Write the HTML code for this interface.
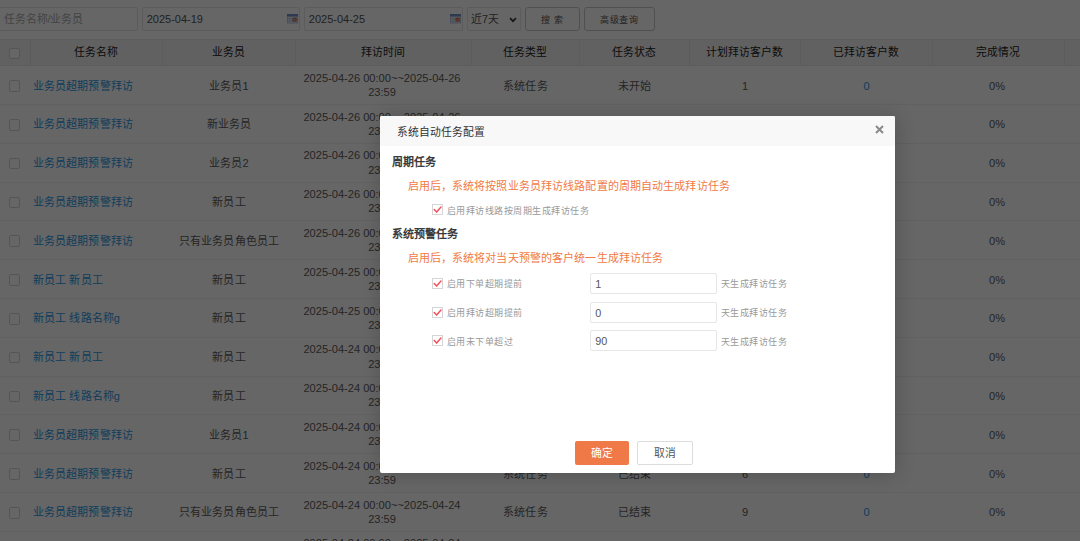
<!DOCTYPE html><html lang="zh-CN"><head><meta charset="utf-8"><style>
*{box-sizing:border-box;margin:0;padding:0}
html,body{width:1080px;height:541px;overflow:hidden}
body{position:relative;background:#fff;font-family:"Liberation Sans",sans-serif;font-size:10.8px;color:#333}
.inp{position:absolute;top:7px;height:23.5px;border:1px solid #e6e6e6;border-radius:2px;background:#fff;font-size:11px;color:#555;line-height:22.5px;padding-left:4px;white-space:nowrap}
.btn{position:absolute;top:7px;height:23.5px;border:1px solid #c9c9c9;border-radius:3px;background:#fff;font-size:9px;letter-spacing:0.6px;color:#555;line-height:24px;text-align:center;white-space:nowrap}
.cal{position:absolute;top:6px;width:11px;height:9.5px}
.hdr{position:absolute;left:0;top:38.5px;width:1080px;height:27px;background:#f2f2f2;border-top:1px solid #e9e9e9;border-bottom:1px solid #e9e9e9}
.th{position:absolute;top:0;height:25px;line-height:25px;text-align:center;color:#222;font-size:10.8px;border-right:1px solid #e6e6e6;white-space:nowrap}
.row{position:absolute;left:0;width:1080px;height:38.8px;border-bottom:1px solid #f3f3f3}
.td{position:absolute;top:0;height:38px;display:flex;align-items:center;justify-content:center;text-align:center;font-size:11px;letter-spacing:0.1px;color:#5c5c5c;line-height:14.2px;white-space:nowrap;padding-top:1.1px}
.tl{justify-content:flex-start;text-align:left;padding-left:3px}
.dt{font-size:11.08px;letter-spacing:0}
.tm{padding-top:0;padding-bottom:0.6px}
.cb{position:absolute;left:8.7px;width:11.5px;height:11.5px;border:1px solid #d5d5d5;border-radius:2px;background:#fff}
.lnk{color:#2b98e4}
.shade{position:absolute;left:0;top:0;width:1080px;height:541px;background:rgba(0,0,0,0.6)}
.dlg{position:absolute;left:380px;top:116px;width:515px;height:356.5px;background:#fff;box-shadow:1px 1px 20px rgba(0,0,0,.2);border-radius:2px;overflow:hidden}
.ttl{position:absolute;left:0;top:0;width:100%;height:29.8px;background:#f8f8f8;font-size:10.8px;color:#333;line-height:29.3px;padding-left:16.5px;padding-top:2.2px}
.x{position:absolute;left:495.3px;top:9px;width:9px;height:9px}
.sec{position:absolute;left:12px;font-size:11px;font-weight:bold;color:#3a3a3a;white-space:nowrap}
.tip{position:absolute;left:27.5px;font-size:11px;letter-spacing:0.12px;color:#f07a45;white-space:nowrap}
.ck{position:absolute;left:51.5px;width:11px;height:11px;border:1px solid #d5d5d5;background:#fff}
.lbl{position:absolute;left:66.5px;font-size:9px;letter-spacing:0.5px;color:#999;white-space:nowrap}
.fi{position:absolute;left:209.8px;width:127px;height:21px;border:1px solid #e6e6e6;border-radius:2px;font-size:10.8px;color:#555;line-height:20.4px;padding-left:4.5px}
.suf{position:absolute;left:340.5px;font-size:9px;letter-spacing:0.5px;color:#999;white-space:nowrap}
.ok{position:absolute;left:195px;top:325px;width:54px;height:23.5px;background:#ef7a47;border-radius:2px;color:#fff;font-size:10.8px;line-height:24.5px;text-align:center}
.cancel{position:absolute;left:256.7px;top:325px;width:56.3px;height:23.5px;background:#fff;border:1px solid #dcdcdc;border-radius:2px;color:#555;font-size:10.8px;line-height:22.5px;text-align:center;padding-left:1px}
</style></head><body>
<div class="inp" style="left:-5px;width:143px;color:#aaa;padding-left:7.5px;font-size:10.8px">任务名称/业务员</div>
<div class="inp" style="left:141.7px;width:158px">2025-04-19<svg class="cal" style="left:144.5px" viewBox="0 0 11 9.5" width="11" height="9.5"><rect x="0" y="0" width="11" height="9.5" fill="#b4c4de"/><rect x="0" y="0" width="11" height="2.2" fill="#7090c8"/><g fill="#e8eef7"><rect x="1" y="3" width="1.6" height="1.5"/><rect x="3.3" y="3" width="1.6" height="1.5"/><rect x="5.6" y="3" width="1.6" height="1.5"/><rect x="7.9" y="3" width="1.6" height="1.5"/><rect x="1" y="5.3" width="1.6" height="1.5"/><rect x="3.3" y="5.3" width="1.6" height="1.5"/><rect x="1" y="7.5" width="1.6" height="1.3"/><rect x="3.3" y="7.5" width="1.6" height="1.3"/><rect x="5.6" y="7.5" width="1.6" height="1.3"/><rect x="7.9" y="7.5" width="1.6" height="1.3"/></g><circle cx="7.6" cy="5.7" r="1.6" fill="none" stroke="#e0602e" stroke-width="1.1"/></svg></div>
<div class="inp" style="left:303.8px;width:158.8px">2025-04-25<svg class="cal" style="left:145px" viewBox="0 0 11 9.5" width="11" height="9.5"><rect x="0" y="0" width="11" height="9.5" fill="#b4c4de"/><rect x="0" y="0" width="11" height="2.2" fill="#7090c8"/><g fill="#e8eef7"><rect x="1" y="3" width="1.6" height="1.5"/><rect x="3.3" y="3" width="1.6" height="1.5"/><rect x="5.6" y="3" width="1.6" height="1.5"/><rect x="7.9" y="3" width="1.6" height="1.5"/><rect x="1" y="5.3" width="1.6" height="1.5"/><rect x="3.3" y="5.3" width="1.6" height="1.5"/><rect x="1" y="7.5" width="1.6" height="1.3"/><rect x="3.3" y="7.5" width="1.6" height="1.3"/><rect x="5.6" y="7.5" width="1.6" height="1.3"/><rect x="7.9" y="7.5" width="1.6" height="1.3"/></g><circle cx="7.6" cy="5.7" r="1.6" fill="none" stroke="#e0602e" stroke-width="1.1"/></svg></div>
<div class="inp" style="left:467px;width:54px;font-size:10.8px;padding-left:3px;line-height:23.5px">近7天<svg style="position:absolute;left:40.7px;top:8.6px" width="8" height="6" viewBox="0 0 8 6"><path d="M1 1.2 L4 4.2 L7 1.2" stroke="#3a3a3a" stroke-width="1.7" fill="none"/></svg></div>
<div class="btn" style="left:524.5px;width:55px">搜 索</div>
<div class="btn" style="left:584px;width:71px">高级查询</div>
<div class="hdr"><div class="cb" style="top:8.2px"></div><div class="th" style="left:0;width:30.5px"></div>
<div class="th" style="left:30px;width:133px">任务名称</div>
<div class="th" style="left:162px;width:134px">业务员</div>
<div class="th" style="left:295px;width:176.5px">拜访时间</div>
<div class="th" style="left:471px;width:109px">任务类型</div>
<div class="th" style="left:579px;width:111px">任务状态</div>
<div class="th" style="left:689px;width:112px">计划拜访客户数</div>
<div class="th" style="left:800px;width:133px">已拜访客户数</div>
<div class="th" style="left:932px;width:133px">完成情况</div>
</div>
<div class="row" style="top:66.20px"><div class="cb" style="top:14px"></div>
<div class="td lnk tl" style="left:30px;width:133px">业务员超期预警拜访</div>
<div class="td" style="left:162px;width:134px">业务员1</div>
<div class="td dt tm" style="left:294px;width:176px">2025-04-26 00:00~~2025-04-26<br>23:59</div>
<div class="td" style="left:471px;width:109px">系统任务</div>
<div class="td" style="left:579px;width:111px">未开始</div>
<div class="td dt" style="left:689px;width:112px">1</div>
<div class="td lnk dt" style="left:800px;width:133px">0</div>
<div class="td dt" style="left:930.5px;width:133px">0%</div>
</div>
<div class="row" style="top:105.00px"><div class="cb" style="top:14px"></div>
<div class="td lnk tl" style="left:30px;width:133px">业务员超期预警拜访</div>
<div class="td" style="left:162px;width:134px">新业务员</div>
<div class="td dt tm" style="left:294px;width:176px">2025-04-26 00:00~~2025-04-26<br>23:59</div>
<div class="td" style="left:471px;width:109px">系统任务</div>
<div class="td" style="left:579px;width:111px">未开始</div>
<div class="td dt" style="left:689px;width:112px">1</div>
<div class="td lnk dt" style="left:800px;width:133px">0</div>
<div class="td dt" style="left:930.5px;width:133px">0%</div>
</div>
<div class="row" style="top:143.80px"><div class="cb" style="top:14px"></div>
<div class="td lnk tl" style="left:30px;width:133px">业务员超期预警拜访</div>
<div class="td" style="left:162px;width:134px">业务员2</div>
<div class="td dt tm" style="left:294px;width:176px">2025-04-26 00:00~~2025-04-26<br>23:59</div>
<div class="td" style="left:471px;width:109px">系统任务</div>
<div class="td" style="left:579px;width:111px">未开始</div>
<div class="td dt" style="left:689px;width:112px">1</div>
<div class="td lnk dt" style="left:800px;width:133px">0</div>
<div class="td dt" style="left:930.5px;width:133px">0%</div>
</div>
<div class="row" style="top:182.60px"><div class="cb" style="top:14px"></div>
<div class="td lnk tl" style="left:30px;width:133px">业务员超期预警拜访</div>
<div class="td" style="left:162px;width:134px">新员工</div>
<div class="td dt tm" style="left:294px;width:176px">2025-04-26 00:00~~2025-04-26<br>23:59</div>
<div class="td" style="left:471px;width:109px">系统任务</div>
<div class="td" style="left:579px;width:111px">未开始</div>
<div class="td dt" style="left:689px;width:112px">1</div>
<div class="td lnk dt" style="left:800px;width:133px">0</div>
<div class="td dt" style="left:930.5px;width:133px">0%</div>
</div>
<div class="row" style="top:221.40px"><div class="cb" style="top:14px"></div>
<div class="td lnk tl" style="left:30px;width:133px">业务员超期预警拜访</div>
<div class="td" style="left:162px;width:134px">只有业务员角色员工</div>
<div class="td dt tm" style="left:294px;width:176px">2025-04-26 00:00~~2025-04-26<br>23:59</div>
<div class="td" style="left:471px;width:109px">系统任务</div>
<div class="td" style="left:579px;width:111px">未开始</div>
<div class="td dt" style="left:689px;width:112px">1</div>
<div class="td lnk dt" style="left:800px;width:133px">0</div>
<div class="td dt" style="left:930.5px;width:133px">0%</div>
</div>
<div class="row" style="top:260.20px"><div class="cb" style="top:14px"></div>
<div class="td lnk tl" style="left:30px;width:133px">新员工 新员工</div>
<div class="td" style="left:162px;width:134px">新员工</div>
<div class="td dt tm" style="left:294px;width:176px">2025-04-25 00:00~~2025-04-25<br>23:59</div>
<div class="td" style="left:471px;width:109px">系统任务</div>
<div class="td" style="left:579px;width:111px">已结束</div>
<div class="td dt" style="left:689px;width:112px">1</div>
<div class="td lnk dt" style="left:800px;width:133px">0</div>
<div class="td dt" style="left:930.5px;width:133px">0%</div>
</div>
<div class="row" style="top:299.00px"><div class="cb" style="top:14px"></div>
<div class="td lnk tl" style="left:30px;width:133px">新员工 线路名称g</div>
<div class="td" style="left:162px;width:134px">新员工</div>
<div class="td dt tm" style="left:294px;width:176px">2025-04-25 00:00~~2025-04-25<br>23:59</div>
<div class="td" style="left:471px;width:109px">系统任务</div>
<div class="td" style="left:579px;width:111px">已结束</div>
<div class="td dt" style="left:689px;width:112px">1</div>
<div class="td lnk dt" style="left:800px;width:133px">0</div>
<div class="td dt" style="left:930.5px;width:133px">0%</div>
</div>
<div class="row" style="top:337.80px"><div class="cb" style="top:14px"></div>
<div class="td lnk tl" style="left:30px;width:133px">新员工 新员工</div>
<div class="td" style="left:162px;width:134px">新员工</div>
<div class="td dt tm" style="left:294px;width:176px">2025-04-24 00:00~~2025-04-24<br>23:59</div>
<div class="td" style="left:471px;width:109px">系统任务</div>
<div class="td" style="left:579px;width:111px">已结束</div>
<div class="td dt" style="left:689px;width:112px">1</div>
<div class="td lnk dt" style="left:800px;width:133px">0</div>
<div class="td dt" style="left:930.5px;width:133px">0%</div>
</div>
<div class="row" style="top:376.60px"><div class="cb" style="top:14px"></div>
<div class="td lnk tl" style="left:30px;width:133px">新员工 线路名称g</div>
<div class="td" style="left:162px;width:134px">新员工</div>
<div class="td dt tm" style="left:294px;width:176px">2025-04-24 00:00~~2025-04-24<br>23:59</div>
<div class="td" style="left:471px;width:109px">系统任务</div>
<div class="td" style="left:579px;width:111px">已结束</div>
<div class="td dt" style="left:689px;width:112px">1</div>
<div class="td lnk dt" style="left:800px;width:133px">0</div>
<div class="td dt" style="left:930.5px;width:133px">0%</div>
</div>
<div class="row" style="top:415.40px"><div class="cb" style="top:14px"></div>
<div class="td lnk tl" style="left:30px;width:133px">业务员超期预警拜访</div>
<div class="td" style="left:162px;width:134px">业务员1</div>
<div class="td dt tm" style="left:294px;width:176px">2025-04-24 00:00~~2025-04-24<br>23:59</div>
<div class="td" style="left:471px;width:109px">系统任务</div>
<div class="td" style="left:579px;width:111px">已结束</div>
<div class="td dt" style="left:689px;width:112px">1</div>
<div class="td lnk dt" style="left:800px;width:133px">0</div>
<div class="td dt" style="left:930.5px;width:133px">0%</div>
</div>
<div class="row" style="top:454.20px"><div class="cb" style="top:14px"></div>
<div class="td lnk tl" style="left:30px;width:133px">业务员超期预警拜访</div>
<div class="td" style="left:162px;width:134px">新员工</div>
<div class="td dt tm" style="left:294px;width:176px">2025-04-24 00:00~~2025-04-24<br>23:59</div>
<div class="td" style="left:471px;width:109px">系统任务</div>
<div class="td" style="left:579px;width:111px">已结束</div>
<div class="td dt" style="left:689px;width:112px">6</div>
<div class="td lnk dt" style="left:800px;width:133px">0</div>
<div class="td dt" style="left:930.5px;width:133px">0%</div>
</div>
<div class="row" style="top:493.00px"><div class="cb" style="top:14px"></div>
<div class="td lnk tl" style="left:30px;width:133px">业务员超期预警拜访</div>
<div class="td" style="left:162px;width:134px">只有业务员角色员工</div>
<div class="td dt tm" style="left:294px;width:176px">2025-04-24 00:00~~2025-04-24<br>23:59</div>
<div class="td" style="left:471px;width:109px">系统任务</div>
<div class="td" style="left:579px;width:111px">已结束</div>
<div class="td dt" style="left:689px;width:112px">9</div>
<div class="td lnk dt" style="left:800px;width:133px">0</div>
<div class="td dt" style="left:930.5px;width:133px">0%</div>
</div>
<div class="row" style="top:531.80px"><div class="cb" style="top:14px"></div>
<div class="td lnk tl" style="left:30px;width:133px">业务员超期预警拜访</div>
<div class="td" style="left:162px;width:134px">只有业务员角色员工</div>
<div class="td dt tm" style="left:294px;width:176px">2025-04-24 00:00~~2025-04-24<br>23:59</div>
<div class="td" style="left:471px;width:109px">系统任务</div>
<div class="td" style="left:579px;width:111px">已结束</div>
<div class="td dt" style="left:689px;width:112px">9</div>
<div class="td lnk dt" style="left:800px;width:133px">0</div>
<div class="td dt" style="left:930.5px;width:133px">0%</div>
</div>
<div class="shade"></div>
<div class="dlg"><div class="ttl">系统自动任务配置</div><svg class="x" viewBox="0 0 9 9"><path d="M1 1 L8 8 M8 1 L1 8" stroke="#8a8a8a" stroke-width="2"/></svg><div class="sec" style="top:37.3px">周期任务</div><div class="tip" style="top:61px">启用后，系统将按照业务员拜访线路配置的周期自动生成拜访任务</div><div class="ck" style="top:88px"><svg style="position:absolute;left:0;top:0" width="10.6" height="10.6" viewBox="0 0 10.6 10.6"><path d="M1.2 4.5 L3.6 7.1 L8.0 2.1" stroke="#f5515f" stroke-width="1.5" fill="none" stroke-linecap="round" stroke-linejoin="round"/></svg></div><div class="lbl" style="top:88px">启用拜访线路按周期生成拜访任务</div><div class="sec" style="top:109px">系统预警任务</div><div class="tip" style="top:133px">启用后，系统将对当天预警的客户统一生成拜访任务</div><div class="ck" style="top:162.0px"><svg style="position:absolute;left:0;top:0" width="10.6" height="10.6" viewBox="0 0 10.6 10.6"><path d="M1.2 4.5 L3.6 7.1 L8.0 2.1" stroke="#f5515f" stroke-width="1.5" fill="none" stroke-linecap="round" stroke-linejoin="round"/></svg></div><div class="lbl" style="top:161.3px">启用下单超期提前</div><div class="fi" style="top:157.0px">1</div><div class="suf" style="top:161.3px">天生成拜访任务</div><div class="ck" style="top:190.6px"><svg style="position:absolute;left:0;top:0" width="10.6" height="10.6" viewBox="0 0 10.6 10.6"><path d="M1.2 4.5 L3.6 7.1 L8.0 2.1" stroke="#f5515f" stroke-width="1.5" fill="none" stroke-linecap="round" stroke-linejoin="round"/></svg></div><div class="lbl" style="top:189.9px">启用拜访超期提前</div><div class="fi" style="top:185.6px">0</div><div class="suf" style="top:189.9px">天生成拜访任务</div><div class="ck" style="top:219.2px"><svg style="position:absolute;left:0;top:0" width="10.6" height="10.6" viewBox="0 0 10.6 10.6"><path d="M1.2 4.5 L3.6 7.1 L8.0 2.1" stroke="#f5515f" stroke-width="1.5" fill="none" stroke-linecap="round" stroke-linejoin="round"/></svg></div><div class="lbl" style="top:218.5px">启用未下单超过</div><div class="fi" style="top:214.2px">90</div><div class="suf" style="top:218.5px">天生成拜访任务</div><div class="ok">确定</div><div class="cancel">取消</div></div>
</body></html>
